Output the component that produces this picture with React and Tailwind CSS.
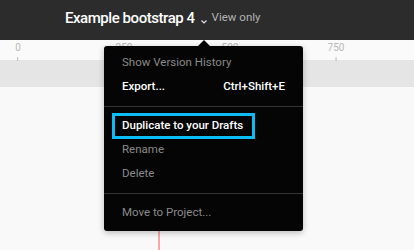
export default function App() {
  const font = { fontFamily: "Roboto, 'Liberation Sans', sans-serif" };
  return (
    <div className="relative w-[414px] h-[250px] overflow-hidden bg-[#f9f9f9]" style={font}>
      {/* top bar */}
      <div className="h-[40px] bg-[#2c2c2c] flex items-center pl-[65px]">
        <span className="text-white text-[15px] leading-none font-medium tracking-[-0.45px] -mt-[4px]">Example bootstrap 4</span>
        <svg className="ml-[5px] mt-[3px]" width="8" height="6" viewBox="0 0 8 6">
          <path d="M1.5 1.5 L4 4 L6.5 1.5" stroke="#e0e0e0" strokeWidth="1.2" fill="none" />
        </svg>
        <span className="ml-[4px] text-[11.5px] text-[#b3b3b3] leading-none -mt-[4px]">View only</span>
      </div>
      {/* ruler */}
      <div className="relative h-[20px] bg-[#fafafa]">
        {[["0", 18], ["250", 124], ["500", 230], ["750", 336]].map(([t, x]) => (
          <div key={t} className="absolute top-0 flex flex-col items-center -translate-x-1/2" style={{ left: x }}>
            <span className="text-[10px] leading-none text-[#b8b8b8] mt-[3px]">{t}</span>
            <div className="w-px h-[4px] bg-[#b8b8b8] mt-[4px]" />
          </div>
        ))}
      </div>
      <div className="h-[27px] bg-[#e5e5e5]" />
      {/* red line */}
      <div className="absolute left-[158px] top-[231px] w-[2px] h-[20px] bg-[#f7a9a9]" />
      {/* menu */}
      <div className="absolute left-[104px] top-[46px] w-[199px] bg-[#050505] rounded-[3px] shadow-[0_2px_6px_rgba(0,0,0,0.25)] pt-[5px] pb-[6px] text-[11.5px]">
        <div className="absolute -top-[6px] left-[94px] w-0 h-0 border-l-[6px] border-r-[6px] border-b-[6px] border-l-transparent border-r-transparent border-b-[#050505]" />
        <div className="h-[24px] flex items-center px-[18px] text-[#8a8a8a]">Show Version History</div>
        <div className="h-[24px] flex items-center justify-between px-[18px] text-white font-medium">
          <span>Export...</span>
          <span>Ctrl+Shift+E</span>
        </div>
        <div className="h-px bg-[#333333] mt-[7px] mb-[6px]" />
        <div className="mx-[8px] w-[143px] h-[26px] border-[3px] border-[#0cbcf4] flex items-center pl-[7px] text-white font-medium -mb-px">
          Duplicate to your Drafts
        </div>
        <div className="h-[24px] flex items-center px-[18px] text-[#8a8a8a]">Rename</div>
        <div className="h-[24px] flex items-center px-[18px] text-[#8a8a8a]">Delete</div>
        <div className="h-px bg-[#333333] mt-[7px] mb-[7px]" />
        <div className="h-[24px] flex items-center px-[18px] text-[#8a8a8a]">Move to Project...</div>
      </div>
    </div>
  );
}
